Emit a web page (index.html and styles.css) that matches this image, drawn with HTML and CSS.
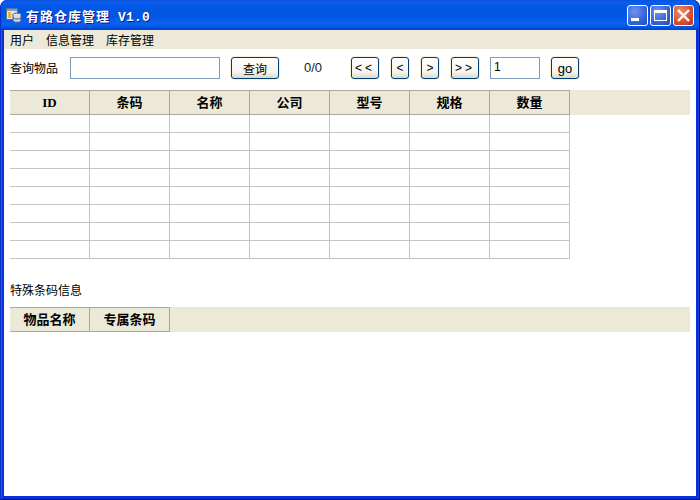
FILE: index.html
```html
<!DOCTYPE html>
<html lang="zh">
<head>
<meta charset="utf-8">
<title>有路仓库管理 V1.0</title>
<link rel="stylesheet" href="styles.css">
</head>
<body>
<div class="window">
  <header class="titlebar">
    <svg class="appicon" width="16" height="16" viewBox="0 0 16 16">
      <rect x="0.5" y="1.5" width="11" height="11" fill="#dfe6f2" stroke="#5a6f98"/>
      <rect x="1" y="2" width="10" height="2" fill="#7f9cd0"/>
      <rect x="2" y="5" width="3" height="6" fill="#e8b830"/>
      <ellipse cx="11" cy="7.5" rx="4" ry="1.5" fill="#eef1f6" stroke="#47587c"/>
      <path d="M7 7.500v6c0 1 1.800 1.800 4 1.800s4-.8 4-1.800v-6" fill="#d5dbe8" stroke="#47587c"/>
      <path d="M7 10.500c0 1 1.800 1.500 4 1.500s4-.5 4-1.500" fill="none" stroke="#47587c"/>
    </svg>
    <span class="title">有路仓库管理<span class="ver"> V1.0</span></span>
    <div class="winbtns">
      <span class="winbtn blue"><svg width="21" height="21" viewBox="0 0 21 21"><rect x="4" y="13" width="8" height="3" fill="#fff"/></svg></span>
      <span class="winbtn blue"><svg width="21" height="21" viewBox="0 0 21 21"><path d="M4 5h13v11H4z M5 8v7h11V8z" fill="#fff" fill-rule="evenodd"/></svg></span>
      <span class="winbtn red"><svg width="21" height="21" viewBox="0 0 21 21"><path d="M5 5l11 11M16 5L5 16" stroke="#fff" stroke-width="2.400" fill="none"/></svg></span>
    </div>
  </header>
  <nav class="menubar"><span>用户</span><span>信息管理</span><span>库存管理</span></nav>
  <main class="content">
    <div class="toolbar">
      <label class="lbl">查询物品</label>
      <input class="field search" type="text">
      <button class="btn b-query">查询</button>
      <span class="count">0/0</span>
      <button class="btn b-wide">&lt;&lt;</button>
      <button class="btn b-narrow">&lt;</button>
      <button class="btn b-narrow">&gt;</button>
      <button class="btn b-wide">&gt;&gt;</button>
      <input class="field page" type="text" value="1">
      <button class="btn b-go">go</button>
    </div>
    <div class="grid-head">
      <div class="hcell">ID</div><div class="hcell">条码</div><div class="hcell">名称</div><div class="hcell">公司</div><div class="hcell">型号</div><div class="hcell">规格</div><div class="hcell">数量</div>
    </div>
    <div class="rows">
      <div class="row"><i></i><i></i><i></i><i></i><i></i><i></i><i></i></div>
      <div class="row"><i></i><i></i><i></i><i></i><i></i><i></i><i></i></div>
      <div class="row"><i></i><i></i><i></i><i></i><i></i><i></i><i></i></div>
      <div class="row"><i></i><i></i><i></i><i></i><i></i><i></i><i></i></div>
      <div class="row"><i></i><i></i><i></i><i></i><i></i><i></i><i></i></div>
      <div class="row"><i></i><i></i><i></i><i></i><i></i><i></i><i></i></div>
      <div class="row"><i></i><i></i><i></i><i></i><i></i><i></i><i></i></div>
      <div class="row"><i></i><i></i><i></i><i></i><i></i><i></i><i></i></div>
    </div>
    <div class="section-label">特殊条码信息</div>
    <div class="grid-head">
      <div class="hcell">物品名称</div><div class="hcell">专属条码</div>
    </div>
  </main>
</div>
</body>
</html>
```
FILE: styles.css
```css
* { box-sizing: border-box; }
html, body { margin: 0; padding: 0; }
body {
  width: 700px;
  height: 500px;
  overflow: hidden;
  font-family: "Noto Sans CJK SC", "Liberation Sans", sans-serif;
  font-size: 12px;
  color: #000;
}
.window {
  width: 700px;
  height: 500px;
  display: flex;
  flex-direction: column;
  background: #0831d9;
  border-radius: 7px 7px 0 0;
  padding: 0 3px 3px;
  border-left: 1px solid #0a2fc4;
  border-right: 1px solid #00138c;
  border-bottom: 1px solid #00138c;
  box-shadow: inset 1px 0 #1a5cf0, inset -1px 0 #0a3ae0;
}
.titlebar {
  flex: 0 0 30px;
  margin: 0 -3px;
  padding: 0 5px 0 1px;
  display: flex;
  align-items: center;
  background: linear-gradient(to bottom, #0a53d8 0, #0a5df0 3px, #0058e6 6px, #0255e0 16px, #0a62f0 24px, #0050dc 28px, #0040c4 30px);
  border-radius: 7px 7px 0 0;
}
.appicon { margin: 0 4px 0 4px; flex: none; }
.title {
  font-family: "Liberation Mono", "Noto Sans CJK SC", monospace;
  font-weight: 700;
  font-size: 13px;
  letter-spacing: 1px;
  color: #fff;
  text-shadow: 1px 1px #0f1089;
  white-space: pre;
}
.ver { letter-spacing: 0.2px; }
.winbtns { margin-left: auto; display: flex; gap: 2px; }
.winbtn {
  width: 21px;
  height: 21px;
  border: 1px solid #fff;
  border-radius: 3px;
  display: block;
  overflow: hidden;
}
.winbtn svg { display: block; margin: -1px; }
.blue { background: radial-gradient(circle at 35% 30%, #6f93ef 0, #3a67dc 55%, #2148c0 100%); }
.red { background: radial-gradient(circle at 35% 30%, #ea9274 0, #d9532f 55%, #b8341a 100%); }
.menubar {
  flex: 0 0 19px;
  background: #ece9d8;
  display: flex;
  align-items: center;
  padding-left: 6px;
  gap: 12px;
  line-height: 19px;
}
.content {
  flex: 1;
  background: #fff;
  padding: 0 6px;
  min-height: 0;
}
.toolbar {
  height: 41px;
  padding-top: 8px;
  display: flex;
  align-items: flex-start;
}
.lbl { width: 60px; flex: none; line-height: 22px; }
.field {
  height: 22px;
  border: 1px solid #7f9db9;
  background: #fff;
  padding: 0 3px;
  font: inherit;
  flex: none;
  margin: 0;
}
.search { width: 150px; }
.page { width: 50px; margin-left: 11px; font-family: "Liberation Sans", sans-serif; font-size: 12px; padding-bottom: 3px; }
.btn {
  height: 22px;
  flex: none;
  padding: 0;
  margin: 0;
  font: inherit;
  color: #000;
  border: 1px solid #003c74;
  border-radius: 3px;
  background: linear-gradient(to bottom, #fff 0, #f5f4ee 70%, #dcd8c8 100%);
  box-shadow: 0 0 0 0.5px #f0dfb0;
}
.b-query { width: 48px; margin-left: 11px; }
.count { width: 72px; flex: none; padding-left: 25px; line-height: 22px; font-family: "Liberation Sans", sans-serif; font-size: 13px; color: #222; }
.b-wide { width: 28px; letter-spacing: 3px; font-family: "Liberation Sans", sans-serif; }
.b-narrow { width: 18px; margin-left: 12px; font-family: "Liberation Sans", sans-serif; }
.b-narrow + .b-wide { margin-left: 12px; }
.b-go { width: 28px; margin-left: 11px; font-family: "Liberation Sans", sans-serif; font-size: 13px; }
.grid-head {
  height: 25px;
  background: #ece9d8;
  display: flex;
}
.hcell {
  width: 80px;
  flex: none;
  height: 25px;
  border: 1px solid #aca899;
  border-width: 1px 1px 1px 0;
  text-align: center;
  font-family: "Liberation Serif", "Noto Sans CJK SC", serif;
  font-weight: 700;
  line-height: 23px;
  font-size: 13px;
}
.rows { width: 560px; }
.row { height: 18px; display: flex; border-bottom: 1px solid #c4c4c4; }
.row i { width: 80px; border-right: 1px solid #c4c4c4; display: block; }
.section-label { height: 48px; padding-top: 22px; line-height: 18px; }
```
